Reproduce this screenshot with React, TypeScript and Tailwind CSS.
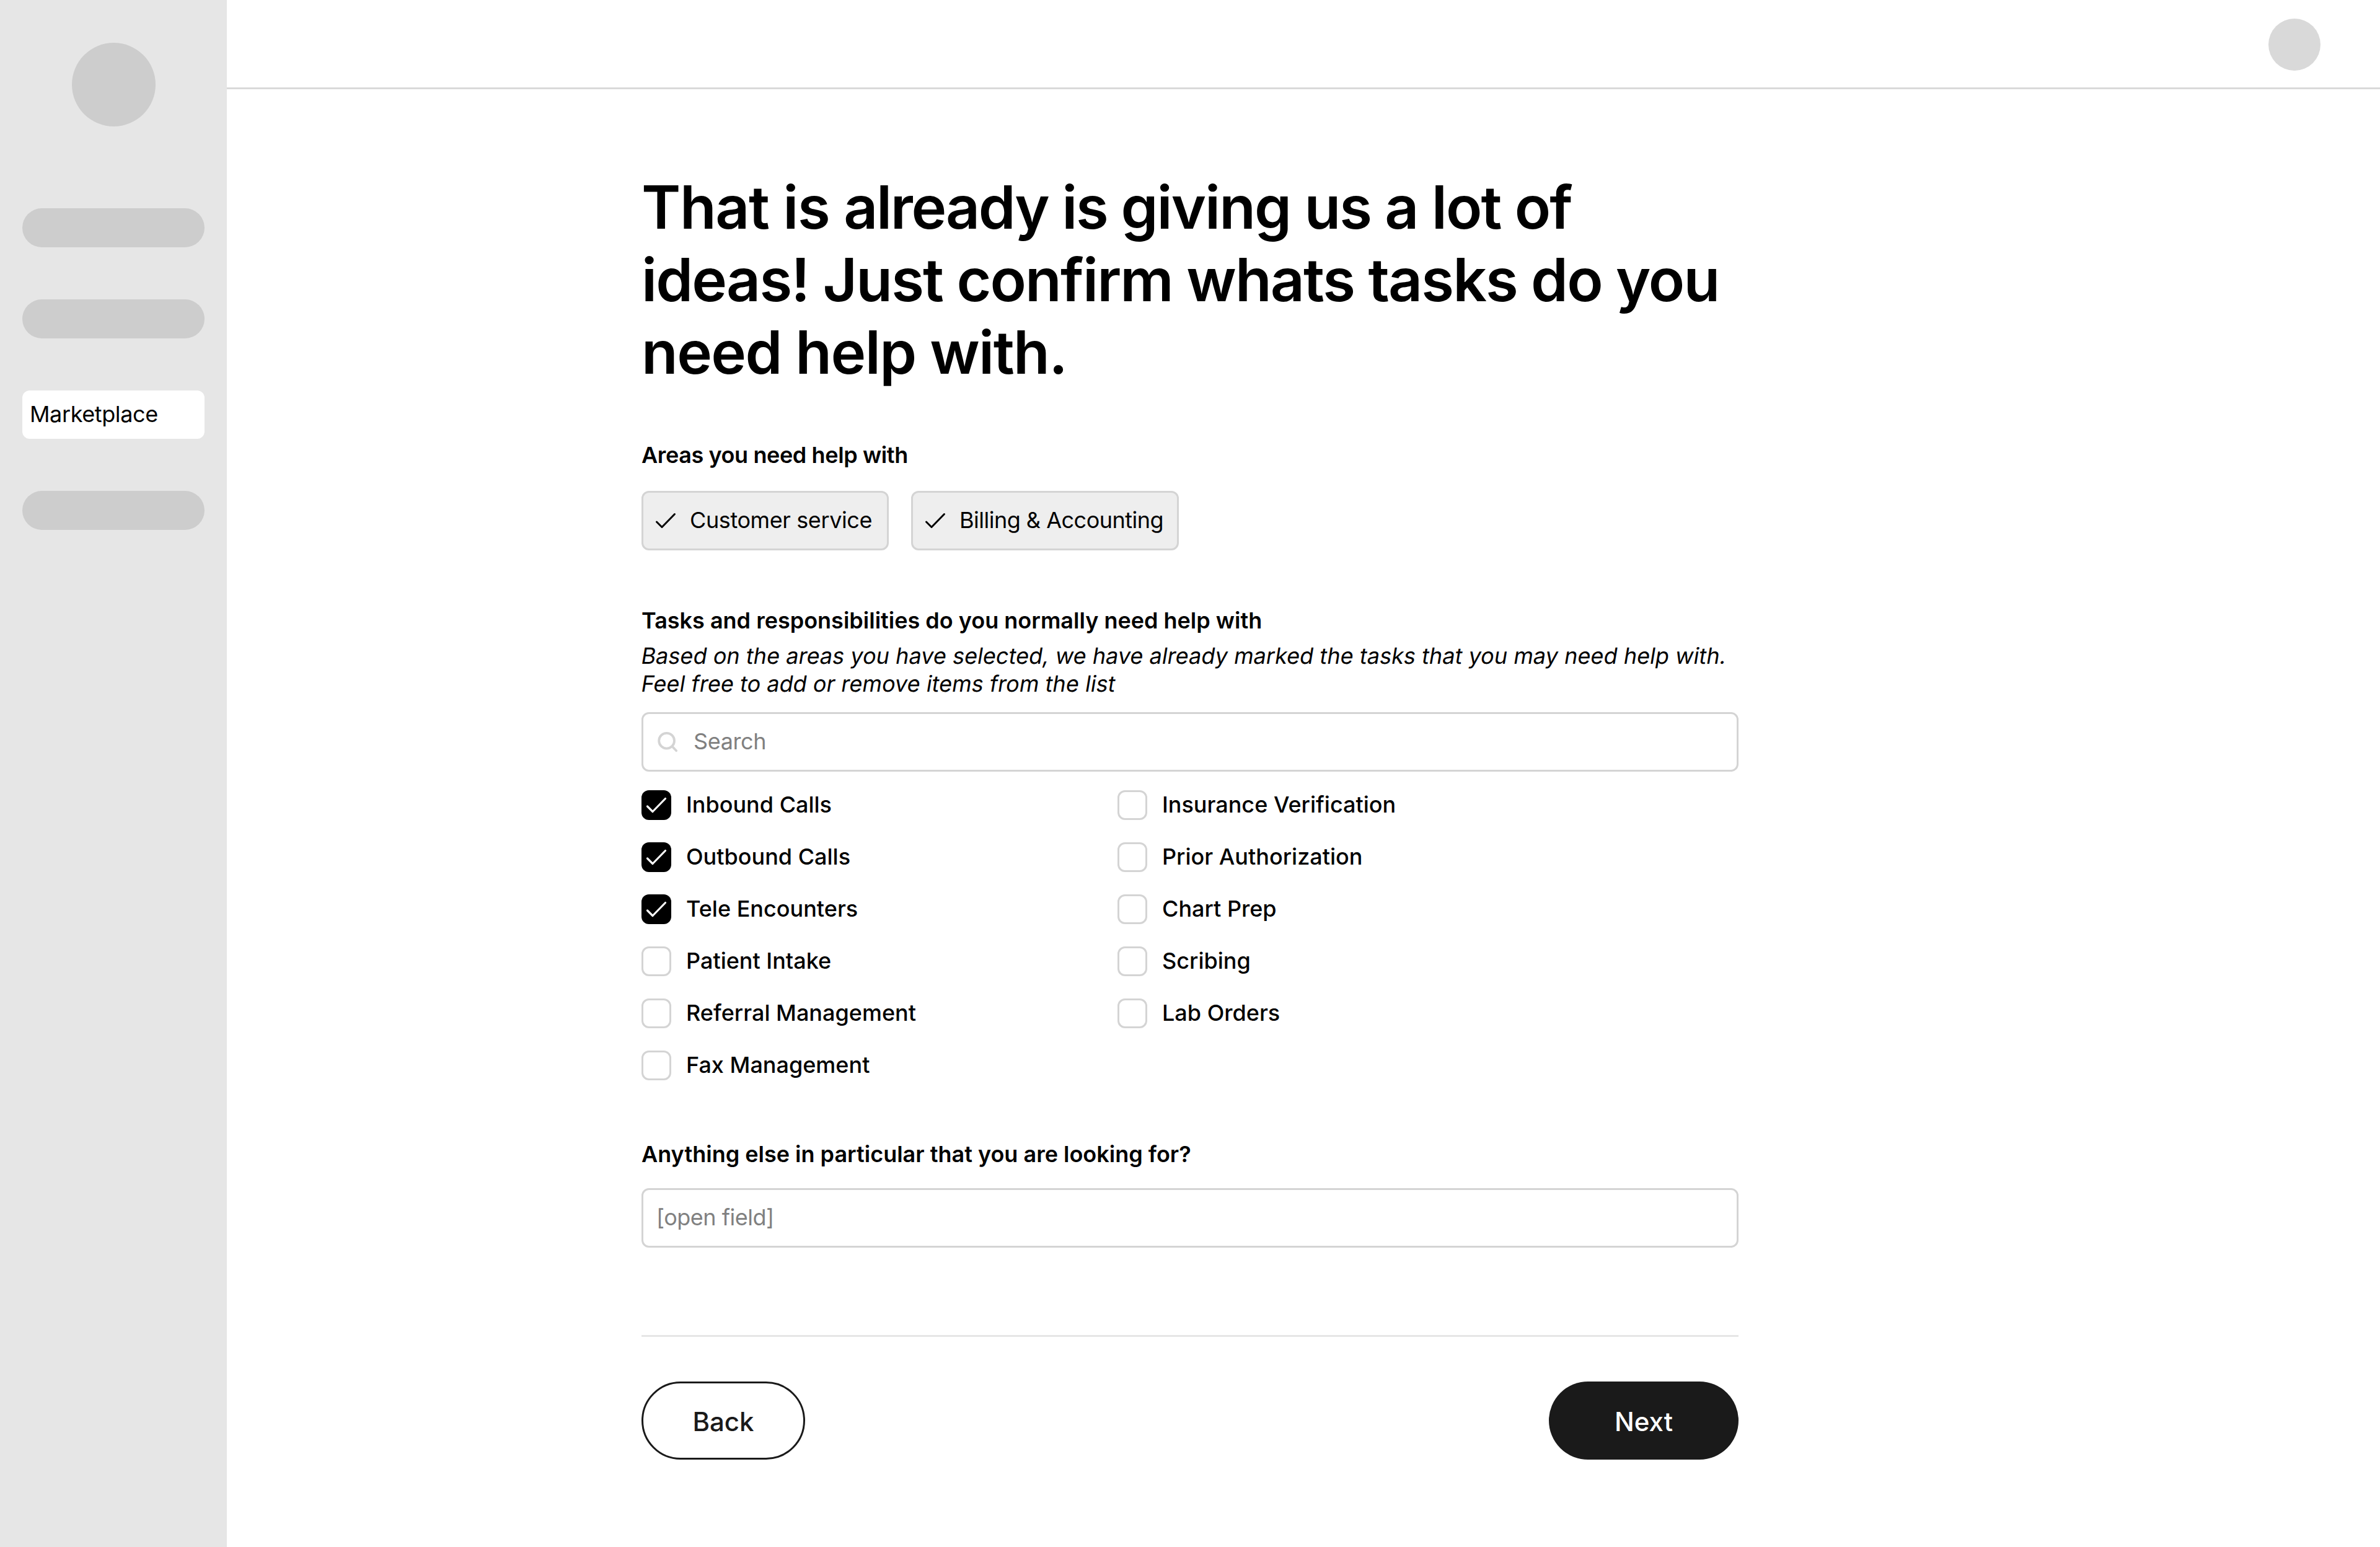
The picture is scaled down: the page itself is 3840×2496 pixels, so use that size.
import React from "react";

type Task = { label: string; checked?: boolean };

const leftTasks: Task[] = [
  { label: "Inbound Calls", checked: true },
  { label: "Outbound Calls", checked: true },
  { label: "Tele Encounters", checked: true },
  { label: "Patient Intake" },
  { label: "Referral Management" },
  { label: "Fax Management" },
];

const rightTasks: Task[] = [
  { label: "Insurance Verification" },
  { label: "Prior Authorization" },
  { label: "Chart Prep" },
  { label: "Scribing" },
  { label: "Lab Orders" },
];

function CheckIcon({ className }: { className: string }) {
  return (
    <svg
      viewBox="0 0 48 48"
      fill="none"
      stroke="currentColor"
      strokeLinecap="round"
      strokeLinejoin="round"
      className={className}
    >
      <path d="M9.5 26 L18 34.5 L38.5 13.5" />
    </svg>
  );
}

function SearchIcon() {
  return (
    <svg
      viewBox="0 0 48 48"
      fill="none"
      stroke="#d4d4d4"
      strokeWidth="3.8"
      strokeLinecap="round"
      className="size-12 shrink-0"
    >
      <circle cx="22.6" cy="22.2" r="12.4" />
      <path d="M31.6 31.4 L38.2 38.2" />
    </svg>
  );
}

function Chip({ label, className }: { label: string; className: string }) {
  return (
    <div
      className={`flex h-24 items-center gap-[15px] rounded-xl border-3 border-[#d4d4d4] bg-[#eeeeee] pl-3 whitespace-nowrap ${className}`}
    >
      <CheckIcon className="size-12 shrink-0 stroke-3" />
      <span className="pb-px">{label}</span>
    </div>
  );
}

function TaskRow({ label, checked }: Task) {
  return (
    <li className="flex h-12 items-center gap-6">
      {checked ? (
        <span className="size-12 rounded-xl bg-black text-white">
          <CheckIcon className="size-12 stroke-[3.2]" />
        </span>
      ) : (
        <span className="size-12 rounded-xl border-3 border-[#d4d4d4]" />
      )}
      <span className="pb-px font-medium">{label}</span>
    </li>
  );
}

function SidebarBar() {
  return <div className="h-[63px] rounded-full bg-[#cdcdcd]" />;
}

export default function App() {
  return (
    <div className="flex h-[2496px] w-[3840px] bg-white font-['Inter',sans-serif] text-[36px] leading-[45px] text-black">
      <aside className="flex w-[366px] shrink-0 flex-col bg-[#e6e6e6] px-9 pt-[69px]">
        <div className="mb-[132px] size-[135px] self-center rounded-full bg-[#cdcdcd]" />
        <nav className="flex flex-col gap-[84px]">
          <SidebarBar />
          <SidebarBar />
          <div className="flex h-[78px] items-center rounded-xl bg-white px-3 pb-px tracking-[-0.011em]">
            Marketplace
          </div>
          <SidebarBar />
        </nav>
      </aside>

      <div className="flex flex-1 flex-col">
        <header className="flex h-36 items-center justify-end border-b-3 border-[#d9d9d9] pt-[3px] pr-24">
          <div className="size-[84px] rounded-full bg-[#d9d9d9]" />
        </header>

        <main className="ml-[669px] flex w-[1770px] flex-col pt-[132px]">
          <h1 className="text-[96px] leading-[117px] font-semibold">
            <span className="block tracking-[-1.94px]">
              <span className="tracking-[-1.4px]">That is </span>
              <span className="tracking-[-2.3px]">already is </span>
              giving us a lot of
            </span>
            <span className="block tracking-[-1.87px]">ideas! Just confirm whats tasks do you</span>
            <span className="block tracking-[-1.6px]">need help with.</span>
          </h1>

          <h2 className="mt-[84px] pt-px font-semibold tracking-[-0.011em]">Areas you need help with</h2>
          <div className="mt-[35px] flex gap-9">
            <Chip label="Customer service" className="w-[399px] tracking-[-0.011em]" />
            <Chip label="Billing & Accounting" className="w-[432px] tracking-[-0.014em]" />
          </div>

          <h2 className="mt-[90px] pt-px font-semibold">
            Tasks and responsibilities do you normally need help with
          </h2>
          <p className="mt-3 tracking-[0.05px] whitespace-nowrap">
            <span className="block w-fit -skew-x-[9.4deg]">
              Based on the areas you have selected, we have already marked the tasks that you may need help with.
            </span>
            <span className="block w-fit -skew-x-[9.4deg]">Feel free to add or remove items from the list</span>
          </p>
          <div className="mt-[23px] flex h-24 items-center gap-[18px] rounded-xl border-3 border-[#d4d4d4] px-[15px] text-[#808080]">
            <SearchIcon />
            <span className="pb-px tracking-[-0.011em]">Search</span>
          </div>

          <div className="mt-[30px] flex">
            <ul className="flex w-[768px] flex-col gap-9">
              {leftTasks.map((t) => (
                <TaskRow key={t.label} {...t} />
              ))}
            </ul>
            <ul className="flex flex-col gap-9">
              {rightTasks.map((t) => (
                <TaskRow key={t.label} {...t} />
              ))}
            </ul>
          </div>

          <h2 className="mt-24 pt-px font-semibold">Anything else in particular that you are looking for?</h2>
          <div className="mt-8 flex h-24 items-center rounded-xl border-3 border-[#d4d4d4] px-[21px] pb-px tracking-[-0.014em] text-[#808080]">
            [open field]
          </div>

          <div className="mt-[141px] flex justify-between border-t-3 border-[#e6e6e6] pt-[72px] text-[42px] leading-[51px] font-medium">
            <button className="h-[126px] w-[264px] rounded-full border-3 border-[#1a1a1a] pt-[3px] text-[#1a1a1a]">
              Back
            </button>
            <button className="h-[126px] w-[306px] rounded-full bg-[#1a1a1a] pt-[3px] text-white">Next</button>
          </div>
        </main>
      </div>
    </div>
  );
}
